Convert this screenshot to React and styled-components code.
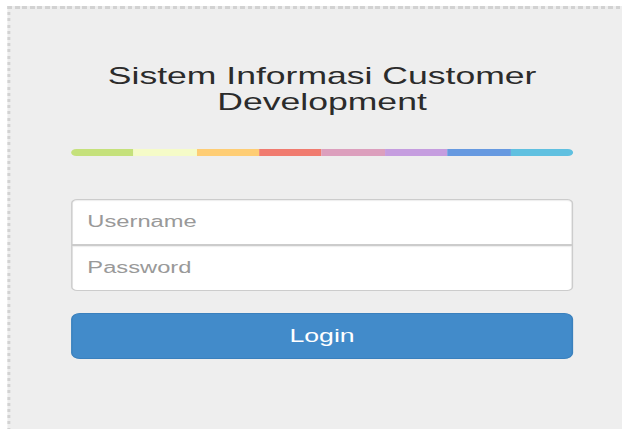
import React from "react";
import styled, { createGlobalStyle } from "styled-components";

// The login page is laid out at its natural 420px width and stretched
// horizontally to fill the wide window.
const STAGE_WIDTH = 420;
const STRETCH = 622 / STAGE_WIDTH;

const GlobalStyle = createGlobalStyle`
  html, body {
    margin: 0;
    padding: 0;
    background: #fff;
    overflow: hidden;
  }
  * { box-sizing: border-box; }
`;

const Stage = styled.div`
  width: ${STAGE_WIDTH}px;
  height: 429px;
  overflow: hidden;
  transform: scaleX(${STRETCH});
  transform-origin: 0 0;
  font-family: "Liberation Sans", Arial, Helvetica, sans-serif;
  color: #333;
`;

// Dashed frame on the top and left edges; the panel runs on past the
// right and bottom of the window.
const Panel = styled.div`
  margin: 6px 0 0 5.4px;
  width: 414.6px;
  height: 423px;
  padding: 56.5px 0 0 42.6px;
  background:
    repeating-linear-gradient(90deg, #d2d2d2 0 3.2px, transparent 3.2px 5.07px) top left / 100% 3px no-repeat,
    repeating-linear-gradient(180deg, #d2d2d2 0 3px, transparent 3px 6.2px) top left / 2px 100% no-repeat,
    #eeeeee;
`;

const Column = styled.form`
  width: 339px;
  display: flex;
  flex-direction: column;
`;

const Title = styled.h3`
  margin: 0;
  font-size: 24px;
  line-height: 26.4px;
  font-weight: 400;
  text-align: center;
  color: #2b2b2b;
`;

const Rainbow = styled.div`
  margin-top: 33.7px;
  height: 7px;
  border-radius: 3.5px;
  overflow: hidden;
  display: flex;
`;

const Stripe = styled.span`
  flex: 1;
  background: ${(p) => p.$color};
`;

const Fields = styled.div`
  margin-top: 43px;
  display: flex;
  flex-direction: column;
`;

const Field = styled.input`
  display: block;
  width: 100%;
  height: 46px;
  padding: 10px;
  font-family: inherit;
  font-size: 16px;
  color: #555;
  background: #fff;
  border: 1px solid #ccc;
  border-radius: ${(p) => (p.$first ? "4px 4px 0 0" : "0 0 4px 4px")};
  box-shadow: inset 0 1px 1px rgba(0, 0, 0, 0.075);
  outline: none;

  &::placeholder {
    color: #999;
  }
`;

const LoginButton = styled.button`
  margin-top: 22px;
  height: 46px;
  width: 100%;
  font-family: inherit;
  font-size: 18px;
  color: #fff;
  background: #428bca;
  border: 1px solid #3a80bd;
  border-radius: 6px;
  cursor: pointer;
`;

const STRIPES = [
  "#c5e17b",
  "#f5fbc8",
  "#fecd74",
  "#f07b6f",
  "#dc9fbd",
  "#c59ddf",
  "#6699e0",
  "#60c0e0",
];

export default function App() {
  return (
    <>
      <GlobalStyle />
      <Stage>
        <Panel>
          <Column onSubmit={(e) => e.preventDefault()}>
            <Title>
              Sistem Informasi Customer
              <br />
              Development
            </Title>
            <Rainbow>
              {STRIPES.map((c) => (
                <Stripe key={c} $color={c} />
              ))}
            </Rainbow>
            <Fields>
              <Field $first type="text" placeholder="Username" />
              <Field type="password" placeholder="Password" />
            </Fields>
            <LoginButton type="submit">Login</LoginButton>
          </Column>
        </Panel>
      </Stage>
    </>
  );
}
